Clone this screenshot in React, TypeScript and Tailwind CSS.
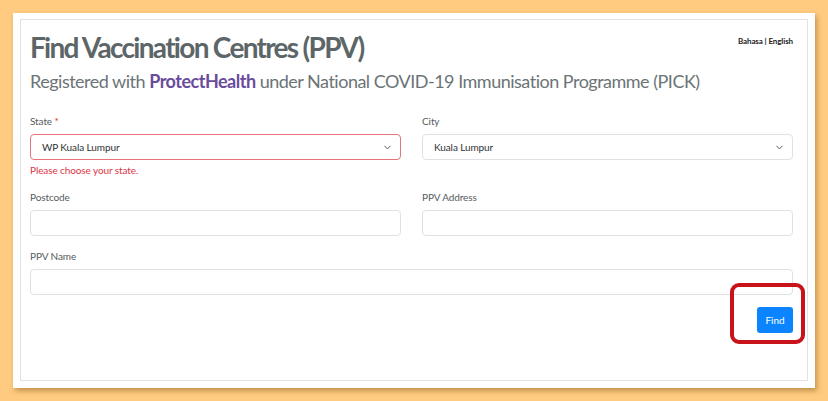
import { ChevronDown } from "lucide-react"

const labelCls = "block text-[10px] leading-[14px] tracking-[-0.1px] text-[#555b5d] mb-[6px]"
const inputCls =
  "block w-full h-[26px] rounded-[4px] border border-[#dfe1e4] bg-white px-3 text-[10px] text-[#333]"

const SelectBox = ({ value, invalid }: { value: string; invalid?: boolean }) => {
  return (
    <div
      className={`flex h-[26px] w-full items-center justify-between rounded-[4px] border bg-white pl-[11px] pr-[7px] text-[10px] tracking-[-0.1px] text-[#2f3234] ${
        invalid ? "border-[#e8737c]" : "border-[#dfe1e4]"
      }`}
    >
      <span>{value}</span>
      <ChevronDown size={11} strokeWidth={2} className="text-[#444]" />
    </div>
  )
}

export default function App() {
  return (
    <div className="min-h-[401px] w-[828px] bg-[#ffcb80] p-[13px] font-['Lato',sans-serif]">
      <div className="h-[375px] w-[802px] bg-white px-[7px] pt-[6px] shadow-[2px_3px_5px_rgba(120,80,20,0.45)]">
        <div className="relative h-[362px] border border-[#e2e2e2] pl-[9px] pr-[14px] pt-[9px]">
          <div className="flex items-start justify-between">
            <h1 className="text-[28px] font-bold leading-[36px] tracking-[-1.7px] text-[#5c6668]">
              Find Vaccination Centres (PPV)
            </h1>
            <div className="mt-[6px] text-[8px] font-bold tracking-[-0.1px] text-[#222]">
              Bahasa | English
            </div>
          </div>
          <p className="mt-[4px] text-[18px] leading-[24px] tracking-[-0.5px] text-[#6b7476]">
            Registered with{" "}
            <span className="font-bold text-[#6a4c9c]">ProtectHealth</span> under National
            COVID-19 Immunisation Programme (PICK)
          </p>

          <div className="mt-[21px] grid grid-cols-2 gap-x-[21px]">
            <div>
              <label className={labelCls}>
                State <span className="text-[#e3202c]">*</span>
              </label>
              <SelectBox value="WP Kuala Lumpur" invalid />
              <div className="mt-[3px] text-[10px] leading-[14px] tracking-[-0.1px] text-[#dc3545]">
                Please choose your state.
              </div>
            </div>
            <div>
              <label className={labelCls}>City</label>
              <SelectBox value="Kuala Lumpur" />
            </div>

            <div className="mt-[13px]">
              <label className={labelCls}>Postcode</label>
              <input className={inputCls} />
            </div>
            <div className="mt-[13px]">
              <label className={labelCls}>PPV Address</label>
              <input className={inputCls} />
            </div>

            <div className="col-span-2 mt-[13px]">
              <label className={labelCls}>PPV Name</label>
              <input className={inputCls} />
            </div>
          </div>

          <div className="mt-[12px] flex justify-end">
            <button className="h-[26px] w-[36px] rounded-[3px] bg-[#0a84ff] text-[10px] text-white">
              Find
            </button>
          </div>

          <div className="absolute left-[709px] top-[263px] h-[61px] w-[75px] rounded-[9px] border-[4px] border-[#c8131b]" />
        </div>
      </div>
    </div>
  )
}
